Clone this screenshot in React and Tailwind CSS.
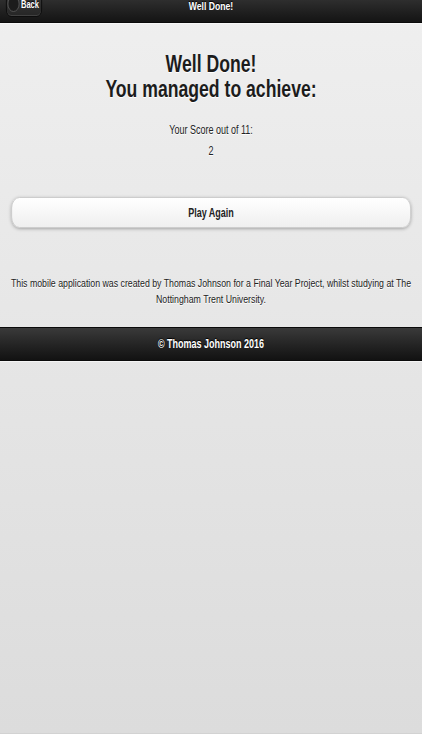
import React from "react";

// The reference is a tablet screenshot squeezed to 75% width, so the page is laid out
// at its natural width and scaled on the x axis only.
export default function App() {
  return (
    <div className="w-full min-h-[750px] overflow-hidden bg-white">
      <div className="w-[562.67px] origin-top-left scale-x-75 font-['Liberation_Sans',Arial,Helvetica,sans-serif]">
        <div className="flex h-[734px] flex-col bg-linear-to-b from-[#efefef] to-[#dcdcdc] border-b border-[#d2d2d2]">
          {/* header */}
          <div className="grid h-[23px] grid-cols-[1fr_auto_1fr] border-b border-[#0a0a0a] bg-linear-to-b from-[#2e2e2e] to-[#141414]">
            <div className="flex items-start pl-[8px]">
              <button className="-mt-[10px] flex h-[27px] w-[48px] items-end gap-[2px] rounded-b-[7px] border border-[#0c0c0c] bg-linear-to-b from-[#3c3c3c] to-[#262626] pb-[6px] pl-[1px] shadow-[inset_0_-1px_0_rgba(255,255,255,0.12)]">
                <span className="mb-[-2px] block h-[16px] w-[16px] rounded-full border border-[#5a5a5a] bg-[#1c1c1c]" />
                <span className="text-[10px] font-bold leading-[11px] text-white [text-shadow:0_-1px_1px_#000]">
                  Back
                </span>
              </button>
            </div>
            <h1 className="pt-[0px] text-[11.5px] font-bold leading-[13px] text-white [text-shadow:0_-1px_1px_#000]">
              Well Done!
            </h1>
            <div />
          </div>

          {/* content */}
          <div className="flex flex-col items-center border-t border-[#f7f7f7] px-[14.67px] text-center text-[#222] [text-shadow:0_1px_0_#fff]">
            <h2 className="mt-[28px] text-[23.5px] font-bold leading-[25px] text-[#1c1c1c]">
              Well Done!
              <br />
              You managed to achieve:
            </h2>
            <p className="mt-[21px] text-[12px] leading-[15px]">Your Score out of 11:</p>
            <p className="mt-[6px] text-[12px] leading-[15px]">2</p>
            <button className="mt-[38px] flex h-[31px] w-full items-center justify-center rounded-[11px] border border-[#c8c8c8] bg-linear-to-b from-[#ffffff] to-[#efefef] text-[12px] font-bold text-[#222] shadow-[0_1px_4px_rgba(0,0,0,0.3)]">
              Play Again
            </button>
            <p className="-mx-[8px] mt-[47px] text-[11.7px] leading-[16px] text-[#222]">
              This mobile application was created by Thomas Johnson for a Final Year Project, whilst studying at The
              Nottingham Trent University.
            </p>
          </div>

          {/* footer */}
          <div className="mt-[20px] flex h-[34px] items-center justify-center border-y border-[#0a0a0a] bg-linear-to-b from-[#3a3a3a] to-[#121212] shadow-[0_1px_0_#f4f4f4]">
            <span className="text-[12px] font-bold text-white [text-shadow:0_-1px_1px_#000]">
              © Thomas Johnson 2016
            </span>
          </div>
        </div>
      </div>
    </div>
  );
}
